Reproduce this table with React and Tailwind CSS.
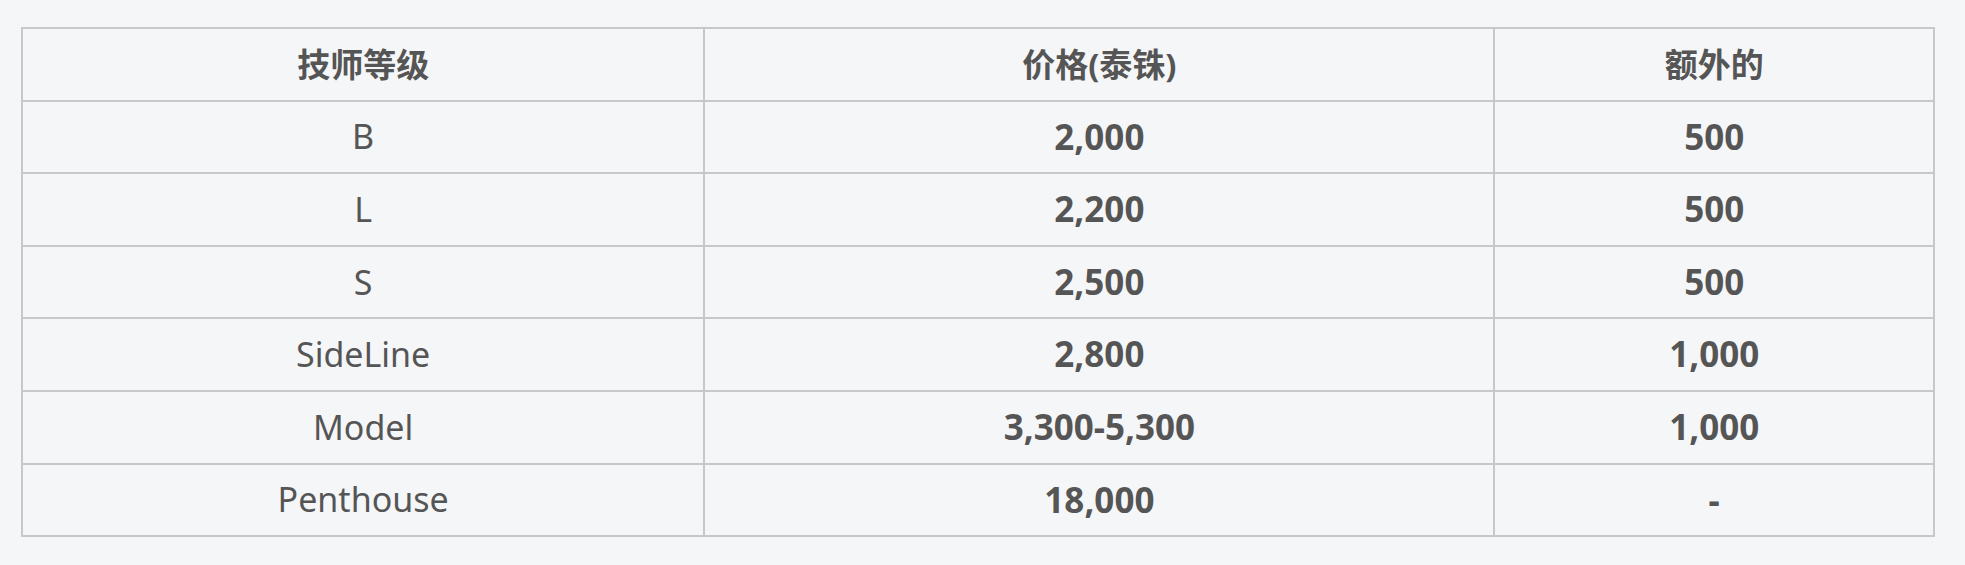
import React from "react";

const rows = [
	["B", "2,000", "500"],
	["L", "2,200", "500"],
	["S", "2,500", "500"],
	["SideLine", "2,800", "1,000"],
	["Model", "3,300-5,300", "1,000"],
	["Penthouse", "18,000", "-"],
];

export default function App() {
	return (
		<div
			className="min-h-screen bg-[#f5f6f8] pt-[27px] pl-[21px] text-[#555555]"
			style={{ fontFamily: '"Noto Sans", "Noto Sans CJK SC", sans-serif' }}
		>
			<table className="w-[1914px] border-collapse border-2 border-[#c8c8c8] text-[33px] text-center">
				<colgroup>
					<col className="w-[683px]" />
					<col className="w-[791px]" />
					<col className="w-[440px]" />
				</colgroup>
				<thead>
					<tr className="h-[72.6px]">
						<th className="border-2 border-[#c8c8c8] font-bold">技师等级</th>
						<th className="border-2 border-[#c8c8c8] font-bold">价格(泰铢)</th>
						<th className="border-2 border-[#c8c8c8] font-bold">额外的</th>
					</tr>
				</thead>
				<tbody>
					{rows.map(([level, price, extra]) => (
						<tr key={level} className="h-[72.6px]">
							<td className="border-2 border-[#c8c8c8] font-normal text-[34px]">{level}</td>
							<td className="border-2 border-[#c8c8c8] font-bold text-[35px]">{price}</td>
							<td className="border-2 border-[#c8c8c8] font-bold text-[35px]">{extra}</td>
						</tr>
					))}
				</tbody>
			</table>
		</div>
	);
}
